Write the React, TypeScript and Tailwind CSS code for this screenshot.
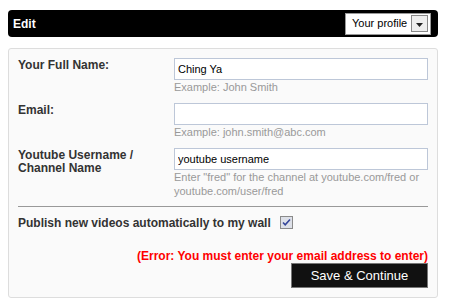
import { useState } from 'react';

const font = { fontFamily: '"Liberation Sans", Arial, sans-serif' };

function Field({
  label,
  value,
  onChange,
  hint,
}: {
  label: React.ReactNode;
  value: string;
  onChange: (v: string) => void;
  hint: React.ReactNode;
}) {
  return (
    <div className="grid grid-cols-[156px_1fr] mb-[9px]">
      <label className="text-[12px] leading-[13px] pt-[1px] font-bold text-[#333]">{label}</label>
      <div>
        <input
          value={value}
          onChange={(e) => onChange(e.target.value)}
          className="block w-full h-[22px] px-[3px] border border-[#bdc7d8] bg-white text-[11px] text-black outline-none"
        />
        <div className="text-[11px] leading-[14px] text-[#999]">{hint}</div>
      </div>
    </div>
  );
}

export default function App() {
  const [name, setName] = useState('Ching Ya');
  const [email, setEmail] = useState('');
  const [youtube, setYoutube] = useState('youtube username');
  const [publish, setPublish] = useState(true);

  return (
    <div className="w-[449px] h-[307px] bg-white pt-[10px]" style={font}>
      {/* Header */}
      <div className="ml-[8px] w-[430px] h-[27px] bg-black rounded-[4px] flex items-center justify-between pl-[5px] pr-[7px]">
        <span className="text-white font-bold text-[12px]">Edit</span>
        <div className="w-[86px] h-[22px] bg-white border border-[#999] flex items-center justify-between pl-[6px] pr-[2px]">
          <span className="text-[11px] text-black">Your profile</span>
          <span className="w-[17px] h-[17px] border border-[#888] bg-[#eee] flex items-end justify-center pb-[4px]">
            <svg width="7" height="4" viewBox="0 0 7 4">
              <path d="M0 0h7L3.5 4z" fill="#222" />
            </svg>
          </span>
        </div>
      </div>

      {/* Form panel */}
      <div className="ml-[8px] mt-[11px] w-[430px] border border-[#dddddd] rounded-[3px] bg-[#fafafa] px-[9px] pt-[9px] pb-[9px]">
        <Field label="Your Full Name:" value={name} onChange={setName} hint="Example: John Smith" />
        <Field label="Email:" value={email} onChange={setEmail} hint="Example: john.smith@abc.com" />
        <Field
          label={
            <>
              Youtube Username /<br />
              Channel Name
            </>
          }
          value={youtube}
          onChange={setYoutube}
          hint='Enter "fred" for the channel at youtube.com/fred or youtube.com/user/fred'
        />

        <div className="-mt-[1px] border-t border-[#999]" />

        <div className="mt-[9px] flex items-center h-[13px]">
          <span className="text-[12px] font-bold text-[#333]">Publish new videos automatically to my wall</span>
          <button
            onClick={() => setPublish(!publish)}
            className="ml-[9px] w-[13px] h-[13px] border border-[#8a8a8a] bg-[#dde0e8] flex items-center justify-center"
          >
            {publish && (
              <svg width="9" height="9" viewBox="0 0 9 9">
                <path d="M1 4.5l2.2 2.3L8 1.5" stroke="#34459a" strokeWidth="1.6" fill="none" />
              </svg>
            )}
          </button>
        </div>

        <div className="mt-[21px] text-right text-[12px] leading-[13px] font-bold text-[#ff0000]">
          (Error: You must enter your email address to enter)
        </div>

        <div className="flex justify-end">
          <button className="w-[137px] h-[25px] bg-[#111] border border-[#777] text-white text-[13px]">
            Save &amp; Continue
          </button>
        </div>
      </div>
    </div>
  );
}
